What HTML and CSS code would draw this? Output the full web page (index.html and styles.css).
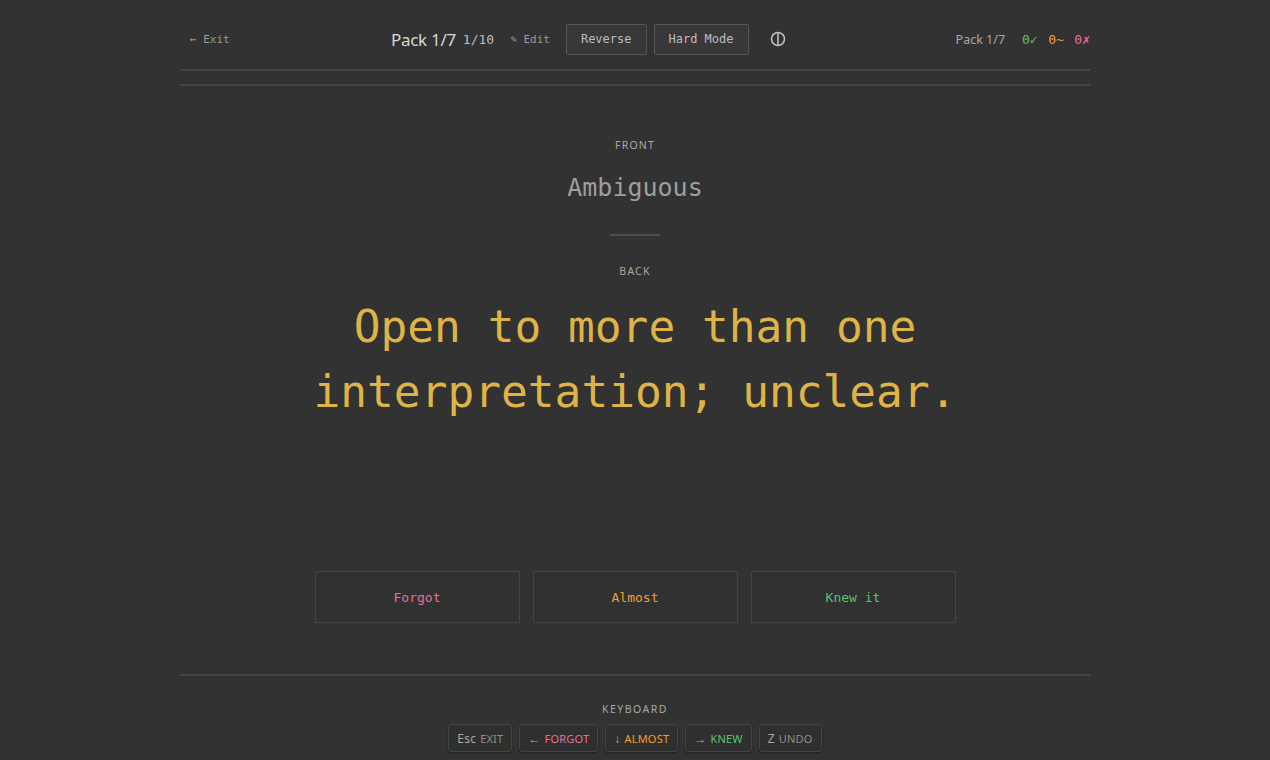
FILE: index.html
```html
<!DOCTYPE html>
<html>
<head>
<meta charset="utf-8">
<link rel="stylesheet" href="styles.css">
</head>
<body>
<div class="page">
  <header class="topbar">
    <div class="left"><a class="exit">← Exit</a></div>
    <div class="center">
      <span class="pack">Pack 1/7</span>
      <span class="count">1/10</span>
      <a class="edit">✎ Edit</a>
      <button class="btn">Reverse</button>
      <button class="btn">Hard Mode</button>
      <span class="theme">
        <svg width="16" height="16" viewBox="0 0 16 16"><circle cx="8" cy="8" r="6.5" fill="none" stroke="#bdbdbd" stroke-width="1.6"/><line x1="8" y1="1.5" x2="8" y2="14.5" stroke="#bdbdbd" stroke-width="1.6"/></svg>
      </span>
    </div>
    <div class="right">
      <span class="rpack">Pack 1/7</span>
      <span class="score ok">0✓</span>
      <span class="score mid">0~</span>
      <span class="score bad">0✗</span>
    </div>
  </header>
  <div class="progress"></div>
  <main class="card">
    <div class="label front-label">FRONT</div>
    <div class="front">Ambiguous</div>
    <div class="divider"></div>
    <div class="label back-label">BACK</div>
    <div class="back">Open to more than one<br>interpretation; unclear.</div>
    <div class="grades">
      <button class="grade forgot">Forgot</button>
      <button class="grade almost">Almost</button>
      <button class="grade knew">Knew it</button>
    </div>
  </main>
  <footer class="keys">
    <div class="label kb-label">KEYBOARD</div>
    <div class="keyrow">
      <span class="key"><span class="k">Esc</span> <span class="act">EXIT</span></span>
      <span class="key"><span class="k">←</span> <span class="act forgot">FORGOT</span></span>
      <span class="key"><span class="k">↓</span> <span class="act almost">ALMOST</span></span>
      <span class="key"><span class="k">→</span> <span class="act knew">KNEW</span></span>
      <span class="key"><span class="k">Z</span> <span class="act">UNDO</span></span>
    </div>
  </footer>
</div>
</body>
</html>
```
FILE: styles.css
```css
html, body {
  margin: 0;
  padding: 0;
  background: #323232;
  height: 100%;
}
body {
  font-family: "Noto Sans", sans-serif;
  color: #bbb;
}
.page {
  width: 910px;
  margin: 0 auto;
}
.topbar {
  display: flex;
  align-items: center;
  height: 30px;
  padding: 24px 0 15px;
  border-bottom: 2px solid #444;
}
.left, .right, .center {
  display: flex;
  align-items: center;
}
.left { flex: 0 0 201px; padding-left: 10px; }
.right { flex: 1; justify-content: flex-end; }
.exit {
  font-family: "DejaVu Sans Mono", monospace;
  font-size: 11px;
  color: #9a9a9a;
}
.pack {
  font-size: 17px;
  color: #d8d8d8;
  letter-spacing: -0.3px;
}
.count {
  font-family: "DejaVu Sans Mono", monospace;
  font-size: 13px;
  color: #bdbdbd;
  margin-left: 7px;
}
.edit {
  font-family: "DejaVu Sans Mono", monospace;
  font-size: 11px;
  color: #9a9a9a;
  margin-left: 16px;
}
.btn {
  font-family: "DejaVu Sans Mono", monospace;
  font-size: 12px;
  color: #bdbdbd;
  background: #383838;
  border: 1px solid #555;
  border-radius: 2px;
  height: 31px;
  padding: 0 14px;
  margin-left: 7px;
}
.edit + .btn { margin-left: 16px; }
.theme {
  display: flex;
  margin-left: 21px;
}
.rpack {
  font-size: 12.5px;
  color: #a8a8a8;
  margin-right: 17px;
}
.score {
  font-family: "DejaVu Sans Mono", monospace;
  font-size: 13px;
  margin-left: 10.5px;
}
.score.ok { color: #5cc46a; margin-left: 0; }
.score.mid { color: #f0a030; }
.score.bad { color: #e8709a; }
.progress {
  height: 2px;
  background: #444;
  margin-top: 13px;
}
.card {
  display: flex;
  flex-direction: column;
  align-items: center;
  padding-top: 52px;
}
.label {
  font-size: 10.5px;
  letter-spacing: 1.2px;
  color: #a8a8a8;
  line-height: 14px;
}
.front {
  font-family: "DejaVu Sans Mono", monospace;
  font-size: 25px;
  line-height: 30px;
  color: #9e9e9e;
  margin-top: 21px;
}
.divider {
  width: 50px;
  height: 2px;
  background: #4e4e4e;
  margin-top: 31px;
}
.back-label { margin-top: 28px; }
.back {
  font-family: "DejaVu Sans Mono", monospace;
  font-size: 44.5px;
  line-height: 65px;
  color: #dfb447;
  text-align: center;
  margin-top: 16px;
}
.grades {
  display: flex;
  gap: 13px;
  margin-top: 147px;
}
.grade {
  width: 205px;
  height: 52px;
  background: #313131;
  border: 1px solid #474542;
  font-family: "DejaVu Sans Mono", monospace;
  font-size: 13px;
}
.grade.forgot, .act.forgot { color: #e8709a; }
.grade.almost, .act.almost { color: #f0a030; }
.grade.knew, .act.knew { color: #5cc46a; }
.keys {
  margin-top: 51px;
  border-top: 2px solid #444;
  display: flex;
  flex-direction: column;
  align-items: center;
  padding-top: 26px;
}
.kb-label { letter-spacing: 1.5px; }
.keyrow {
  display: flex;
  gap: 7px;
  margin-top: 8px;
}
.key {
  display: flex;
  align-items: center;
  gap: 4px;
  height: 26px;
  padding: 0 8px;
  border: 1px solid #444;
  border-radius: 3px;
  background: #2f2f2f;
  box-shadow: 0 1px 2px rgba(0,0,0,0.4);
  font-size: 11px;
  letter-spacing: 0.2px;
}
.k { color: #a8a8a8; font-size: 12px; }
.act { color: #8e8e8e; }
```
